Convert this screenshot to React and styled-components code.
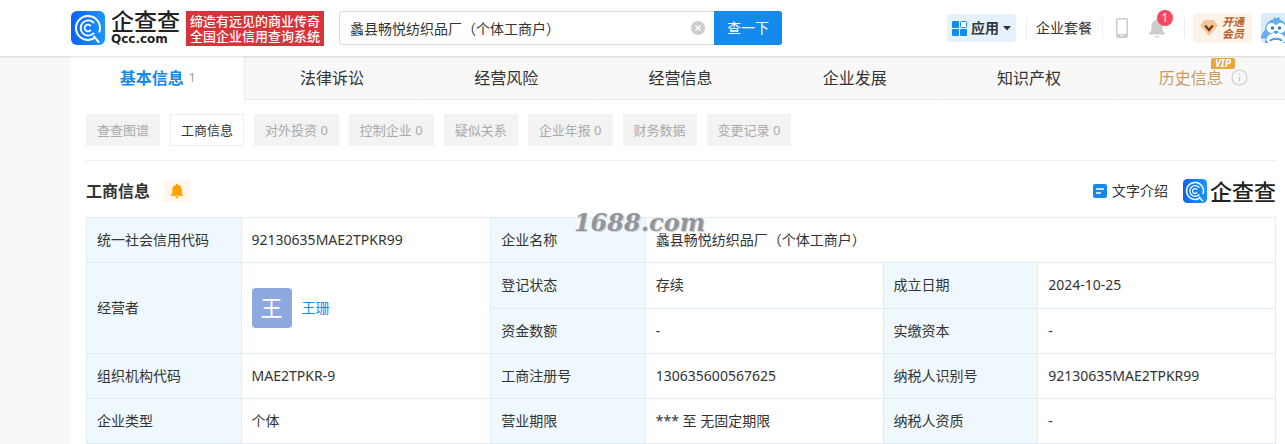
import React, { useState } from 'react'
import styled, { createGlobalStyle } from 'styled-components'

const tabs = ['法律诉讼', '经营风险', '经营信息', '企业发展', '知识产权']

const subTabs = ['查查图谱', '工商信息', '对外投资 0', '控制企业 0', '疑似关系', '企业年报 0', '财务数据', '变更记录 0']

const QccIcon = ({ size }) => (
	<svg width={size} height={size} viewBox="0 0 34 34" fill="none" aria-hidden="true">
		<defs>
			<linearGradient id="qcc" x1="0" y1="0" x2="1" y2="0">
				<stop offset="0" stopColor="#0b63f6" />
				<stop offset="1" stopColor="#1a97fb" />
			</linearGradient>
		</defs>
		<rect width="34" height="34" rx="6" fill="url(#qcc)" />
		<g stroke="#fff" strokeLinecap="round">
			<path d="M22.8 27.4A12 12 0 1 1 28.4 20.6M23 25.4L27.6 31" strokeWidth="2" />
			<path d="M22.6 11.6A7.600 7.600 0 1 0 22.6 22.400" strokeWidth="1.900" />
			<path d="M19.400 14.600A3.400 3.400 0 1 0 19.400 19.400" strokeWidth="1.800" />
		</g>
	</svg>
)

const Header = () => {
	const [keyword, setKeyword] = useState('蠡县畅悦纺织品厂（个体工商户）')

	return (
		<TopBar>
			<Brand href="#">
				<QccIcon size={34} />
				<BrandText>
					<BrandName>企查查</BrandName>
					<BrandDomain>Qcc.com</BrandDomain>
				</BrandText>
			</Brand>
			<Slogan>缔造有远见的商业传奇<br />全国企业信用查询系统</Slogan>
			<SearchForm onSubmit={(e) => e.preventDefault()}>
				<SearchInput aria-label="搜索企业" value={keyword} onChange={(e) => setKeyword(e.target.value)} />
				<ClearButton type="button" aria-label="清空" onClick={() => setKeyword('')}>
					<svg width="14" height="14" viewBox="0 0 14 14">
						<circle cx="7" cy="7" r="7" fill="#ccc" />
						<path d="M4.5 4.5l5 5M9.5 4.5l-5 5" stroke="#fff" strokeWidth="1.3" />
					</svg>
				</ClearButton>
				<SearchButton type="submit">查一下</SearchButton>
			</SearchForm>
			<Tools>
				<AppButton type="button">
					<svg width="15" height="15" viewBox="0 0 15 15" fill="#128bed">
						<rect width="7" height="7" rx="1" />
						<rect y="8" width="7" height="7" rx="1" />
						<rect x="8" y="8" width="7" height="7" rx="1" />
						<rect x="8.5" y="0.5" width="6" height="6" rx="1" fill="#fff" stroke="#128bed" strokeWidth="1" />
					</svg>
					应用
					<svg width="8" height="5" viewBox="0 0 8 5"><path d="M0 0h8L4 4.6z" fill="#333" /></svg>
				</AppButton>
				<Divider />
				<ToolLink href="#">企业套餐</ToolLink>
				<Divider />
				<IconButton type="button" aria-label="手机版">
					<svg width="12" height="20" viewBox="0 0 12 20" fill="none">
						<rect x="0.75" y="0.75" width="10.5" height="18.5" rx="1.5" stroke="#ccc" strokeWidth="1.5" />
						<path d="M1 16h10v3H1z" fill="#ccc" />
						<path d="M4.5 17.5h3" stroke="#fff" />
					</svg>
				</IconButton>
				<IconButton type="button" aria-label="消息">
					<svg width="18" height="20" viewBox="0 0 18 20" fill="#ccc">
						<path d="M9 1c.8 0 1.2.5 1.2 1.2C13 2.8 14.6 5 14.6 7.8v4.400L17 15.500V16.500H1v-1l2.400-3.300V7.800C3.400 5 5 2.800 7.800 2.200 7.800 1.500 8.200 1 9 1zM6.800 18h4.400v1.200H6.800z" />
					</svg>
					<Badge>1</Badge>
				</IconButton>
				<Divider />
				<MemberLink href="#">
					<svg width="18" height="16" viewBox="0 0 18 16">
						<path d="M4.500 0h9L18 5.500 9 16 0 5.500z" fill="#f3c894" />
						<path d="M5.200 5.500L9 10l3.800-4.500" fill="none" stroke="#6b3a15" strokeWidth="2.200" />
					</svg>
					<MemberText>开通<br />会员</MemberText>
				</MemberLink>
				<Avatar href="#" aria-label="个人中心">
					<svg width="30" height="30" viewBox="0 0 30 30">
						<rect width="30" height="30" rx="3" fill="#dcecff" />
						<path d="M11 8l3-4 1 2 3-2 1 4z" fill="#4a9be8" />
						<path d="M4 17C4 10 9 6 15 6s11 4 11 11l3 6-3 1v6H4v-5l-4 1c0-4 1-6 4-9z" fill="#66adf0" />
						<circle cx="10.500" cy="15" r="5" fill="#fff" />
						<circle cx="19.500" cy="15" r="5" fill="#fff" />
						<circle cx="11.500" cy="15" r="1.800" fill="#3c7fc4" />
						<circle cx="18.500" cy="15" r="1.800" fill="#3c7fc4" />
						<path d="M5 27c2-6 6-7 10-7s8 1 10 7l-3 3H8z" fill="#fff" />
						<path d="M9 28c2-3 10-3 12 0" fill="none" stroke="#4a9be8" strokeWidth="1.800" />
						<path d="M12.500 18h5L15 21.500z" fill="#4a9be8" />
					</svg>
				</Avatar>
			</Tools>
		</TopBar>
	)
}

const App = () => {
	const [active, setActive] = useState('工商信息')

	return (
		<Page>
			<GlobalStyle />
			<Header />
			<Main>
				<TabBar>
					<Tab href="#" $active>基本信息<TabCount>1</TabCount></Tab>
					{tabs.map((t) => <Tab href="#" key={t}>{t}</Tab>)}
					<Tab href="#" $vip>
						<VipLabel>历史信息<VipBadge>VIP</VipBadge></VipLabel>
						<svg width="17" height="17" viewBox="0 0 17 17" fill="none" stroke="#ccc">
							<circle cx="8.500" cy="8.500" r="7.500" strokeWidth="1.200" />
							<path d="M8.500 7.500v5M8.500 4.500v1.500" strokeWidth="1.300" />
						</svg>
					</Tab>
				</TabBar>
				<Content>
					<SubTabs>
						{subTabs.map((t) => (
							<SubTab type="button" key={t} $active={t === active} onClick={() => setActive(t)}>{t}</SubTab>
						))}
					</SubTabs>
					<SectionHead>
						<h2>工商信息</h2>
						<BellButton type="button" aria-label="订阅">
							<svg width="12" height="14" viewBox="0 0 12 14" fill="#ffa200">
								<path d="M6 0c.7 0 1 .4 1 1 2.400.500 3.700 2.300 3.700 4.600v3.600L12 11v.8H0V11l1.300-1.800V5.600C1.300 3.300 2.600 1.500 5 1c0-.6.3-1 1-1zM4 12.500h4c-.2.900-1 1.500-2 1.500s-1.800-.6-2-1.500z" />
							</svg>
						</BellButton>
						<IntroLink href="#">
							<svg width="14" height="14" viewBox="0 0 14 14">
								<rect width="14" height="14" rx="2" fill="#128bed" />
								<path d="M3 5h8M3 9h5" stroke="#fff" strokeWidth="1.400" />
							</svg>
							文字介绍
						</IntroLink>
						<SmallBrand>
							<QccIcon size={24} />
							企查查
						</SmallBrand>
					</SectionHead>
					<TableBox>
						<InfoTable>
							<colgroup>
								<col width="13%" />
								<col width="21%" />
								<col width="13%" />
								<col width="20%" />
								<col width="13%" />
								<col width="20%" />
							</colgroup>
							<tbody>
								<tr>
									<th scope="row">统一社会信用代码</th>
									<td>92130635MAE2TPKR99</td>
									<th scope="row">企业名称</th>
									<td colSpan="3">蠡县畅悦纺织品厂（个体工商户）</td>
								</tr>
								<tr>
									<th scope="row" rowSpan="2">经营者</th>
									<td rowSpan="2">
										<Owner>
											<OwnerAvatar>王</OwnerAvatar>
											<a href="#">王珊</a>
										</Owner>
									</td>
									<th scope="row">登记状态</th>
									<td>存续</td>
									<th scope="row">成立日期</th>
									<td>2024-10-25</td>
								</tr>
								<tr>
									<th scope="row">资金数额</th>
									<td>-</td>
									<th scope="row">实缴资本</th>
									<td>-</td>
								</tr>
								<tr>
									<th scope="row">组织机构代码</th>
									<td>MAE2TPKR-9</td>
									<th scope="row">工商注册号</th>
									<td>130635600567625</td>
									<th scope="row">纳税人识别号</th>
									<td>92130635MAE2TPKR99</td>
								</tr>
								<tr>
									<th scope="row">企业类型</th>
									<td>个体</td>
									<th scope="row">营业期限</th>
									<td>*** 至 无固定期限</td>
									<th scope="row">纳税人资质</th>
									<td>-</td>
								</tr>
							</tbody>
						</InfoTable>
						<Watermark>1688.com</Watermark>
					</TableBox>
				</Content>
			</Main>
		</Page>
	)
}

const GlobalStyle = createGlobalStyle`
*{
	box-sizing: border-box;
}
body{
	margin: 0;
	background-color: #f8f8f8;
	color: #333;
	font-family: "Noto Sans", "Noto Sans CJK SC", sans-serif;
	font-size: 14px;
	line-height: 22px;
}
a{
	color: inherit;
	text-decoration: none;
}
button, input{
	font: inherit;
	color: inherit;
}
button{
	border: none;
	padding: 0;
	background: none;
	cursor: pointer;
}
svg{
	display: block;
	flex: none;
}
`

const Page = styled.div`
overflow: hidden;
`

// Header

const TopBar = styled.header`
display: flex;
align-items: center;
height: 56px;
padding-left: 71px;
background-color: #fff;
box-shadow: 0 1px 2px rgba(0, 0, 0, 0.15);
position: relative;
white-space: nowrap;
`

const Brand = styled.a`
display: flex;
align-items: center;
gap: 6px;
`

const BrandText = styled.span`
display: flex;
flex-direction: column;
color: #222;
`

const BrandName = styled.span`
font-size: 23px;
line-height: 22px;
font-weight: 500;
`

const BrandDomain = styled.span`
font-family: "DejaVu Sans", sans-serif;
font-size: 12px;
line-height: 14px;
font-weight: bold;
`

const Slogan = styled.div`
margin-left: 6px;
padding: 3px 4px 2px;
background-color: #d9333a;
color: #fff;
font-size: 13px;
line-height: 15px;
font-weight: 500;
`

const SearchForm = styled.form`
display: flex;
align-items: center;
margin-left: 15px;
width: 443px;
height: 34px;
border: 1px solid #ddd;
border-right: none;
border-radius: 3px;
`

const SearchInput = styled.input`
flex: 1;
min-width: 0;
height: 32px;
border: none;
outline: none;
padding: 0 10px;
background: none;
`

const ClearButton = styled.button`
margin-right: 9px;
`

const SearchButton = styled.button`
width: 68px;
height: 34px;
border-radius: 0 3px 3px 0;
background-color: #128bed;
color: #fff;
`

const Tools = styled.div`
display: flex;
align-items: center;
margin-left: auto;
margin-right: -6px;
`

const AppButton = styled.button`
display: flex;
align-items: center;
gap: 4px;
height: 28px;
padding: 0 5px;
margin-right: 10px;
border-radius: 3px;
background-color: #e5f2fd;
font-weight: bold;
`

const Divider = styled.span`
width: 1px;
height: 20px;
background-color: #eee;
`

const ToolLink = styled.a`
padding: 0 10px 0 9px;
`

const IconButton = styled.button`
position: relative;
margin-left: 13px;
margin-right: 7px;

& + &{
	margin-right: 18px;
}
`

const Badge = styled.span`
position: absolute;
top: -8px;
right: -7px;
width: 16px;
height: 16px;
border-radius: 8px;
background-color: #f9485e;
color: #fff;
font-size: 12px;
line-height: 16px;
`

const MemberLink = styled.a`
display: flex;
align-items: center;
gap: 4px;
height: 30px;
margin: 0 9px 0 8px;
padding: 0 8px 0 7px;
border-radius: 3px;
background-color: #fdf3e9;
color: #b5622b;
`

const MemberText = styled.span`
font-size: 11px;
line-height: 12px;
font-style: italic;
font-weight: bold;
`

const Avatar = styled.a`
display: block;
`

// Tabs

const Main = styled.main`
margin-left: 71px;
margin-right: -6px;
padding-bottom: 20px;
background-color: #fff;
`

const TabBar = styled.nav`
display: grid;
grid-template-columns: repeat(7, 1fr);
background-color: #f8f8f8;
`

const Tab = styled.a`
display: flex;
align-items: center;
justify-content: center;
height: 44px;
border-right: 1px solid ${(p) => (p.$active ? '#e8e8e8' : 'transparent')};
border-bottom: 1px solid ${(p) => (p.$active ? '#fff' : '#e8e8e8')};
background-color: ${(p) => (p.$active ? '#fff' : 'transparent')};
color: ${(p) => (p.$active ? '#128bed' : p.$vip ? '#c99b64' : '#333')};
font-size: 16px;
font-weight: ${(p) => (p.$active ? 'bold' : 'normal')};
`

const TabCount = styled.span`
margin-left: 5px;
color: #999;
font-size: 12px;
font-weight: normal;
`

const VipLabel = styled.span`
position: relative;
margin-right: 8px;
`

const VipBadge = styled.span`
position: absolute;
top: -9px;
right: -12px;
width: 24px;
height: 11px;
border-radius: 2px 2px 2px 0;
background-color: #e5a640;
color: #fff;
font-size: 10px;
line-height: 11px;
font-style: italic;
font-weight: bold;
text-align: center;
`

const Content = styled.div`
padding: 14px 15px 0;
`

const SubTabs = styled.div`
display: flex;
gap: 10px;
padding-bottom: 14px;
border-bottom: 1px solid #eee;
`

const SubTab = styled.button`
height: 32px;
padding: 0 10px;
border: 1px solid ${(p) => (p.$active ? '#eee' : '#f3f3f3')};
background-color: ${(p) => (p.$active ? '#fff' : '#f3f3f3')};
color: ${(p) => (p.$active ? '#333' : '#aaa')};
font-size: 13px;
`

const SectionHead = styled.div`
display: flex;
align-items: center;
height: 56px;
padding-top: 4px;

h2{
	margin: 0;
	font-size: 16px;
	font-weight: bold;
}
`

const BellButton = styled.button`
display: flex;
align-items: center;
justify-content: center;
width: 26px;
height: 22px;
margin-left: 14px;
border-radius: 2px;
background-color: #fff6ec;
`

const IntroLink = styled.a`
display: flex;
align-items: center;
gap: 5px;
margin-left: auto;
`

const SmallBrand = styled.span`
display: flex;
align-items: center;
gap: 3px;
margin-left: 15px;
color: #222;
font-size: 22px;
font-weight: 500;
`

// Registration table

const TableBox = styled.div`
position: relative;
`

const InfoTable = styled.table`
width: 100%;
table-layout: fixed;
border-collapse: collapse;

th, td{
	height: 45px;
	padding: 11px 10px;
	border: 1px solid #e1edf4;
	text-align: left;
	font-weight: normal;
}
th{
	background-color: #eff8fc;
}
td[rowspan]{
	padding: 25px 10px;
}
`

const Owner = styled.div`
display: flex;
align-items: center;
gap: 10px;

a{
	color: #128bed;
}
`

const OwnerAvatar = styled.span`
width: 40px;
height: 40px;
border-radius: 4px;
background-color: #8ea8e0;
color: #fff;
font-size: 22px;
line-height: 38px;
text-align: center;
`

const Watermark = styled.span`
position: absolute;
top: -8px;
left: 41%;
color: #92969a;
font-family: "DejaVu Serif", serif;
font-size: 24px;
line-height: 28px;
font-style: italic;
font-weight: bold;
text-shadow: 1px 1px 0 #d4d4d4;
pointer-events: none;
`

export default App
